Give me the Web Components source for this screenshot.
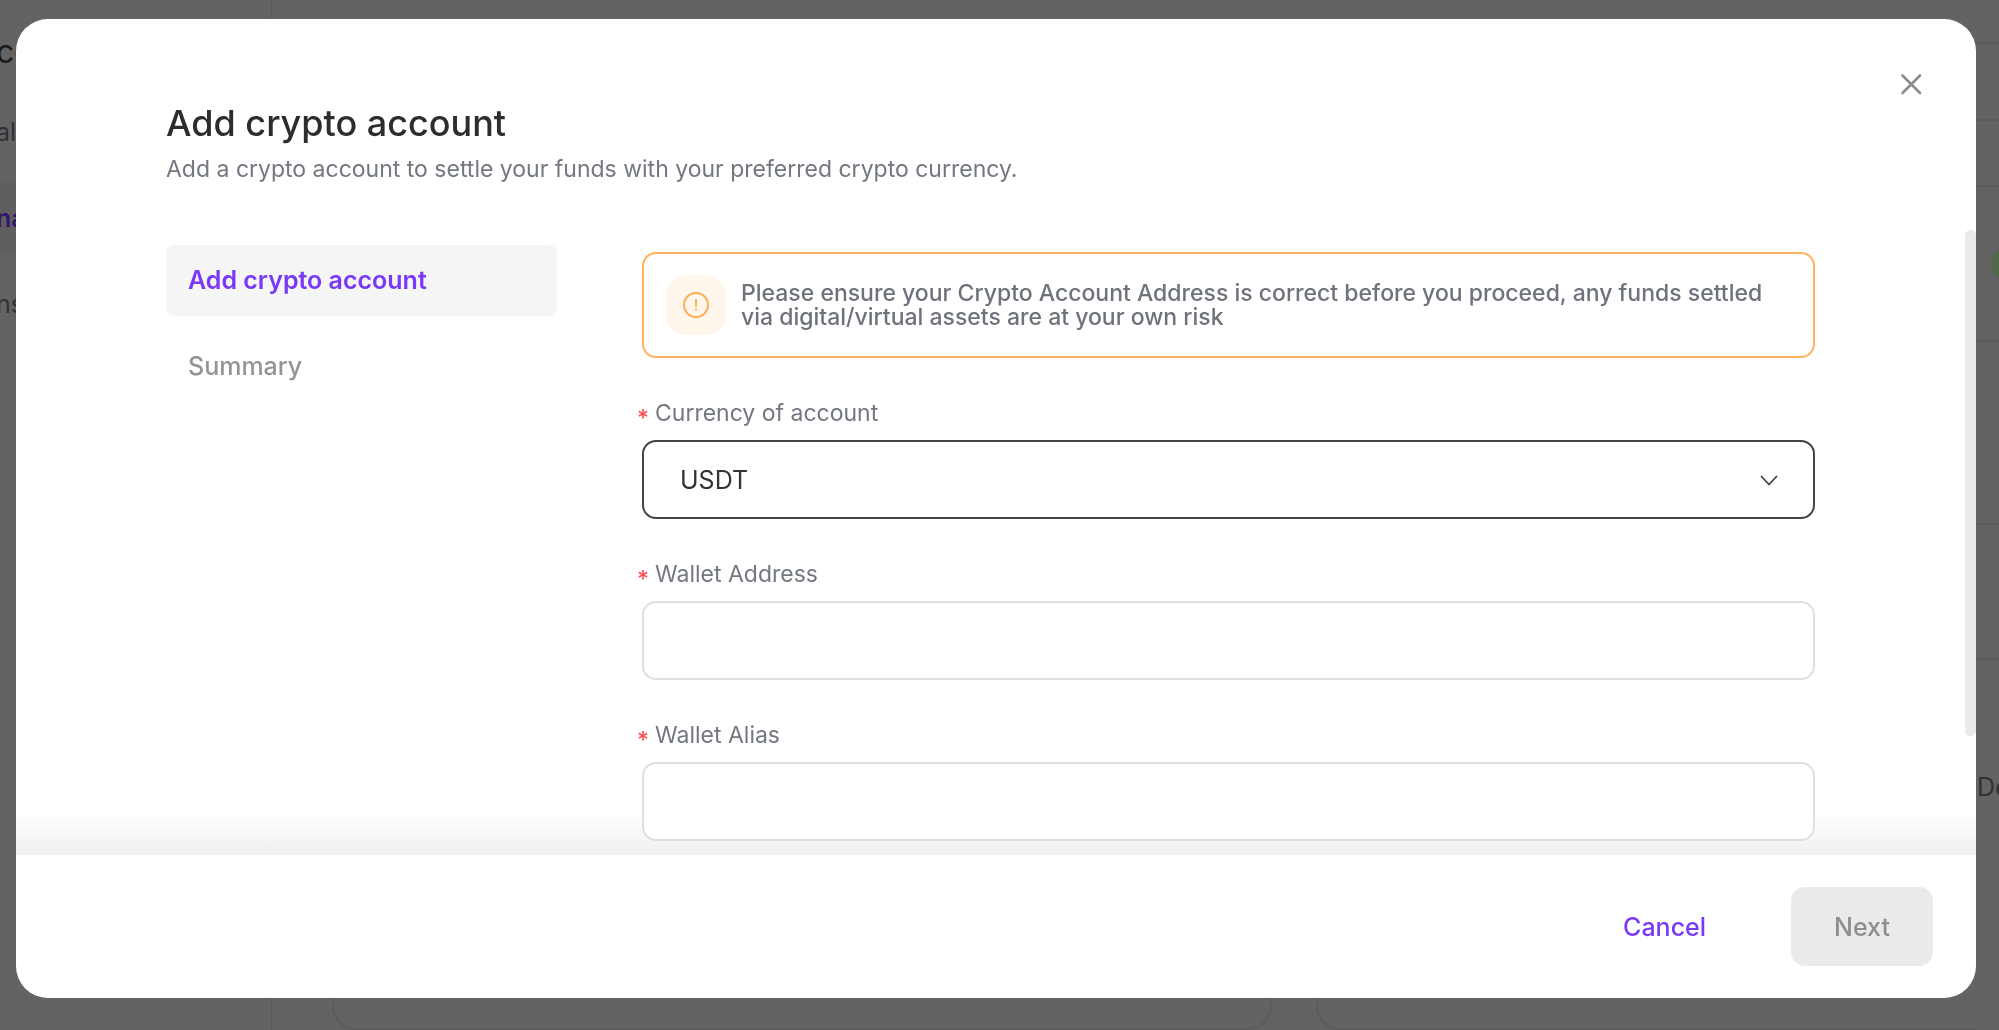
<!DOCTYPE html>
<html lang="en">
<head>
<meta charset="utf-8">
<meta name="viewport" content="width=device-width, initial-scale=1">
<title>Add crypto account</title>
<style>
  html, body {
    height: 100%;
    margin: 0;
  }
  body {
    font-family: Inter, "Liberation Sans", sans-serif;
    font-size: 25px;
    line-height: 32px;
    color: #2d2d2d;
    overflow: hidden;
  }
</style>
</head>
<body>
  <app-backdrop></app-backdrop>

  <app-modal>
    <span slot="title">Add crypto account</span>
    <span slot="subtitle">Add a crypto account to settle your funds with your preferred crypto currency.</span>

    <step-link slot="steps" active>Add crypto account</step-link>
    <step-link slot="steps">Summary</step-link>

    <alert-box>Please ensure your Crypto Account Address is correct before you proceed, any funds settled via digital/virtual assets are at your own risk</alert-box>
    <select-field label="Currency of account" value="USDT"></select-field>
    <text-field label="Wallet Address"></text-field>
    <text-field label="Wallet Alias"></text-field>

    <app-button slot="actions" kind="link">Cancel</app-button>
    <app-button slot="actions" disabled>Next</app-button>
  </app-modal>

<script>
// small helper: template from a string
function tpl(html) {
  const template = document.createElement('template')
  template.innerHTML = html
  return template
}

/* page behind the modal, already dimmed */

const backdropTemplate = tpl(`
  <style>
    :host {
      display: grid;
      grid-template-columns: 272px 1fr 24px;
      height: 100%;
      background: #636363;
      overflow: hidden;
    }
    aside {
      border-right: 1px solid #5b5b5b;
      padding-top: 18px;
      text-indent: -4px;
    }
    .brand {
      padding-bottom: 10px;
      font-size: 32px;
      line-height: 68px;
      color: #1b1b1b;
    }
    nav a {
      display: block;
      height: 72px;
      margin-bottom: 14px;
      line-height: 72px;
      color: #2f3135;
      text-decoration: none;
    }
    nav a.active {
      background: #5f5f5f;
      color: #33156f;
      font-weight: 600;
    }
    main {
      display: flex;
      align-items: flex-end;
      gap: 44px;
      padding-left: 60px;
    }
    .card {
      box-sizing: border-box;
      flex: 940;
      height: 120px;
      border: 2px solid #5c5c5c;
      border-radius: 24px;
    }
    .card + .card {
      flex: 660;
      border-right: none;
      border-bottom-right-radius: 0;
    }
    .table {
      display: grid;
      grid-template-rows: 44px 77px 66px 155px 183px 135px 1fr;
    }
    .table div {
      border-bottom: 2px solid #5b5b5b;
    }
    .table div:last-child {
      border: none;
      padding: 111px 0 0 2px;
      overflow: hidden;
      color: #2f3135;
    }
    .status {
      display: flex;
      align-items: center;
    }
    .status i {
      flex: none;
      width: 36px;
      height: 36px;
      margin-left: 16px;
      border-radius: 50%;
      background: #50694a;
    }
  </style>
  <aside>
    <div class="brand">cc</div>
    <nav>
      <a href="#">al</a>
      <a href="#" class="active">na</a>
      <a href="#">ns</a>
    </nav>
  </aside>
  <main>
    <div class="card"></div>
    <div class="card"></div>
  </main>
  <div class="table">
    <div></div>
    <div></div>
    <div></div>
    <div class="status"><i></i></div>
    <div></div>
    <div></div>
    <div>De</div>
  </div>
`)

class AppBackdrop extends HTMLElement {
  constructor() {
    super()
    this.attachShadow({ mode: 'open' })
    this.shadowRoot.appendChild(backdropTemplate.content.cloneNode(true))
  }
}

/* modal */

const modalTemplate = tpl(`
  <style>
    :host {
      position: fixed;
      inset: 19px 23px 32px 16px;
      display: flex;
      flex-direction: column;
      border-radius: 32px;
      background: #fff;
      overflow: hidden;
    }
    header {
      display: flex;
      justify-content: space-between;
      align-items: flex-start;
      padding: 48px 48px 45px 150px;
    }
    h1 {
      margin: 34px 0 8px;
      font-size: 36px;
      line-height: 44px;
      font-weight: 500;
    }
    p {
      margin: 0;
      font-size: 23px;
      color: #737780;
    }
    .close {
      display: block;
      padding: 0;
      border: none;
      background: none;
      cursor: pointer;
    }
    svg {
      display: block;
    }
    .body {
      flex: 1;
      min-height: 0;
      display: flex;
      background: linear-gradient(to top, #f0f0f0, #fff 44px);
      overflow: hidden;
    }
    .steps {
      flex: none;
      box-sizing: border-box;
      width: 541px;
      padding: 15px 0 0 150px;
    }
    form {
      flex: 1;
      min-width: 0;
      padding: 22px 150px 0 85px;
    }
    .thumb {
      width: 11px;
      height: 81%;
      border-radius: 6px;
      background: #e9eaeb;
    }
    footer {
      display: flex;
      justify-content: flex-end;
      gap: 42px;
      padding: 32px 43px;
    }
  </style>
  <header>
    <div>
      <h1><slot name="title"></slot></h1>
      <p><slot name="subtitle"></slot></p>
    </div>
    <button class="close" type="button" aria-label="Close">
      <svg width="34" height="34" viewBox="0 0 34 34" fill="none" stroke="#8c8c8c" stroke-width="2.6" stroke-linecap="round">
        <path d="M8.500 8.500l17.500 17.500M26 8.500L8.500 26"/>
      </svg>
    </button>
  </header>
  <div class="body">
    <nav class="steps"><slot name="steps"></slot></nav>
    <form><slot></slot></form>
    <div class="thumb"></div>
  </div>
  <footer><slot name="actions"></slot></footer>
`)

class AppModal extends HTMLElement {
  constructor() {
    super()
    this.attachShadow({ mode: 'open' })
    this.shadowRoot.appendChild(modalTemplate.content.cloneNode(true))

    this.shadowRoot.querySelector('.close').addEventListener('click', () => this.remove())
  }
}

/* one step in the left menu */

const stepTemplate = tpl(`
  <style>
    :host {
      display: block;
      margin-bottom: 15px;
    }
    a {
      display: block;
      padding: 19px 22px 20px;
      border-radius: 8px;
      color: #949494;
      font-weight: 500;
      text-decoration: none;
    }
    :host([active]) a {
      background: #f5f5f6;
      color: #7a38f8;
      font-weight: 600;
    }
  </style>
  <a href="#"><slot></slot></a>
`)

class StepLink extends HTMLElement {
  constructor() {
    super()
    this.attachShadow({ mode: 'open' })
    this.shadowRoot.appendChild(stepTemplate.content.cloneNode(true))
  }
}

/* orange warning */

const alertTemplate = tpl(`
  <style>
    :host {
      display: flex;
      align-items: center;
      gap: 15px;
      padding: 21px 22px;
      border: 2px solid #ffb35c;
      border-radius: 14px;
      font-size: 23px;
      line-height: 24px;
      font-weight: 500;
      color: #6e727b;
    }
    .icon {
      flex: none;
      display: grid;
      place-items: center;
      width: 60px;
      height: 60px;
      border-radius: 20px;
      background: #fff6ec;
    }
  </style>
  <div class="icon">
    <svg width="28" height="28" viewBox="0 0 28 28" fill="none" stroke="#ffae52" stroke-width="2" stroke-linecap="round">
      <circle cx="14" cy="14" r="12"/>
      <path d="M14 9v6"/>
      <path d="M14 18.6v.2"/>
    </svg>
  </div>
  <div><slot></slot></div>
`)

class AlertBox extends HTMLElement {
  constructor() {
    super()
    this.attachShadow({ mode: 'open' })
    this.shadowRoot.appendChild(alertTemplate.content.cloneNode(true))
  }
}

/* form fields */

const fieldStyle = `
  <style>
    :host {
      display: block;
      margin-top: 39px;
    }
    label {
      display: flex;
      gap: 6px;
      margin: 0 0 11px -5px;
      font-size: 23px;
      color: #737780;
    }
    label::before {
      content: "*";
      padding-top: 10px;
      line-height: 22px;
      font-weight: 500;
      color: #ff4d4f;
    }
    .box {
      display: grid;
      align-items: center;
    }
    input, select {
      grid-area: 1 / 1;
      box-sizing: border-box;
      width: 100%;
      height: 79px;
      padding: 0 36px;
      border: 2px solid #dedfe0;
      border-radius: 14px;
      background: #fff;
      font: inherit;
      color: #333;
      appearance: none;
      outline: none;
    }
    select {
      border-color: #444;
    }
    svg {
      grid-area: 1 / 1;
      justify-self: end;
      margin-right: 36px;
      pointer-events: none;
    }
  </style>
`

const textFieldTemplate = tpl(`
  ${fieldStyle}
  <label for="field"></label>
  <div class="box"><input id="field" type="text"></div>
`)

const selectFieldTemplate = tpl(`
  ${fieldStyle}
  <label for="field"></label>
  <div class="box">
    <select id="field"><option></option></select>
    <svg width="20" height="20" viewBox="0 0 20 20" fill="none" stroke="#444" stroke-width="1.8" stroke-linecap="round" stroke-linejoin="round">
      <path d="M2.500 6.500l7.500 8 7.500-8"/>
    </svg>
  </div>
`)

class TextField extends HTMLElement {
  constructor() {
    super()
    this.attachShadow({ mode: 'open' })
    this.shadowRoot.appendChild(textFieldTemplate.content.cloneNode(true))
  }

  connectedCallback() {
    this.shadowRoot.querySelector('label').textContent = this.getAttribute('label')
  }
}

class SelectField extends HTMLElement {
  constructor() {
    super()
    this.attachShadow({ mode: 'open' })
    this.shadowRoot.appendChild(selectFieldTemplate.content.cloneNode(true))
  }

  connectedCallback() {
    this.shadowRoot.querySelector('label').textContent = this.getAttribute('label')
    this.shadowRoot.querySelector('option').textContent = this.getAttribute('value')
  }
}

/* buttons in the footer */

const buttonTemplate = tpl(`
  <style>
    :host {
      display: block;
    }
    button {
      height: 79px;
      padding: 0 43px;
      border: none;
      border-radius: 14px;
      background: #e9eaec;
      color: #8e8e8e;
      font: inherit;
      font-weight: 500;
    }
    :host([kind="link"]) button {
      background: none;
      color: #7a38f8;
      cursor: pointer;
    }
  </style>
  <button type="button"><slot></slot></button>
`)

class AppButton extends HTMLElement {
  constructor() {
    super()
    this.attachShadow({ mode: 'open' })
    this.shadowRoot.appendChild(buttonTemplate.content.cloneNode(true))
  }

  connectedCallback() {
    this.shadowRoot.querySelector('button').disabled = this.hasAttribute('disabled')
  }
}

customElements.define('app-backdrop', AppBackdrop)
customElements.define('app-modal', AppModal)
customElements.define('step-link', StepLink)
customElements.define('alert-box', AlertBox)
customElements.define('select-field', SelectField)
customElements.define('text-field', TextField)
customElements.define('app-button', AppButton)
</script>
</body>
</html>
